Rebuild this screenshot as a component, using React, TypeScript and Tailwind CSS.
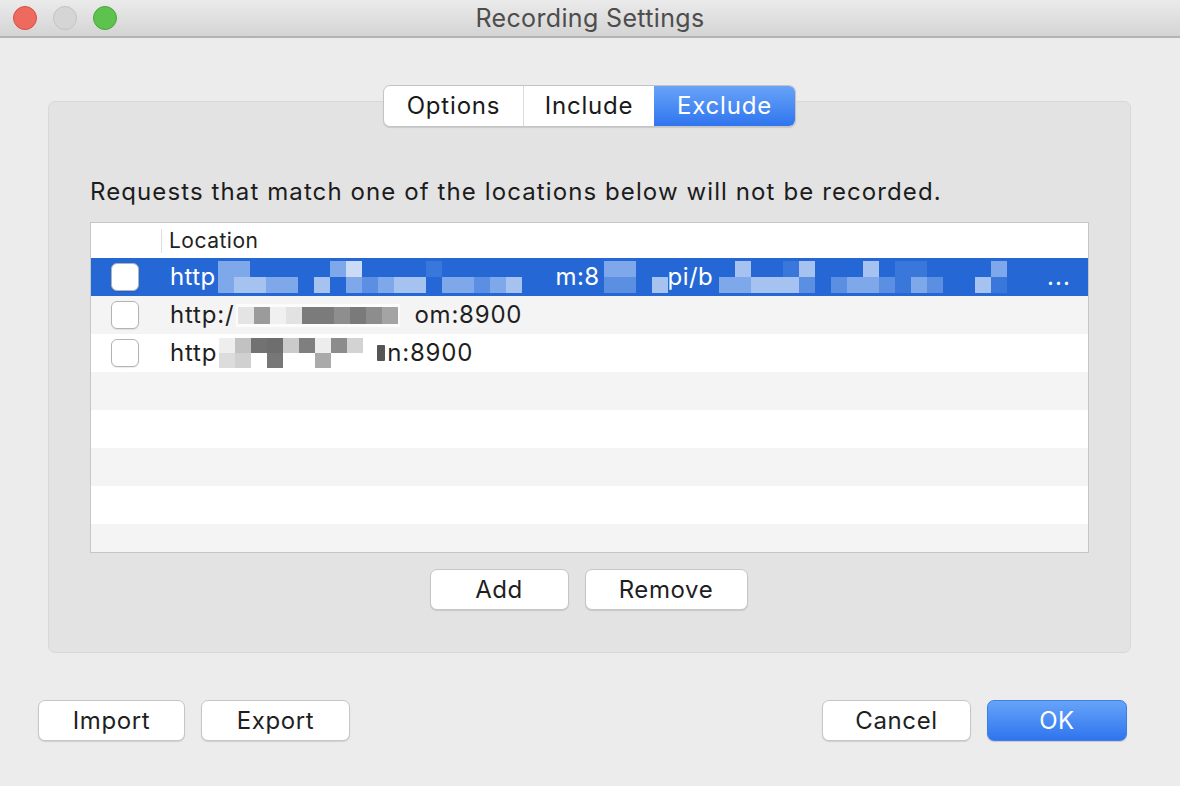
import React from "react";

const BLUE = [
  "bg-[#2568d5]",
  "bg-[#3a77db]",
  "bg-[#5a8fe2]",
  "bg-[#7ea8ea]",
  "bg-[#a6c2f1]",
  "bg-[#cbdaf6]",
];

function BlueMosaic({ top, bottom }: { top: string; bottom: string }) {
  return (
    <div className="flex flex-col shrink-0">
      {[top, bottom].map((row, ri) => (
        <div key={ri} className="flex">
          {row.split("").map((c, i) => (
            <div key={i} className={`w-[16px] h-[16px] ${BLUE[Number(c)]}`} />
          ))}
        </div>
      ))}
    </div>
  );
}

function GreyTiles({ tiles, h = "h-[17px]" }: { tiles: string[]; h?: string }) {
  return (
    <div className="flex">
      {tiles.map((t, i) => (
        <div key={i} className={`w-[16px] ${h} ${t}`} />
      ))}
    </div>
  );
}

function Checkbox() {
  return (
    <div className="w-[28px] h-[28px] rounded-[6px] bg-white border border-[#b3b3b3] shadow-[0_1px_1px_rgba(0,0,0,0.08)]" />
  );
}

function MacButton({ label, w, primary = false }: { label: string; w: string; primary?: boolean }) {
  return (
    <button
      className={
        primary
          ? `${w} h-[41px] rounded-[7px] text-white text-[24px] tracking-[0.6px] leading-none bg-gradient-to-b from-[#66a3f8] to-[#2f74ee] border border-[#3d7fe8] shadow-[0_1px_1px_rgba(0,0,0,0.15)]`
          : `${w} h-[41px] rounded-[7px] text-[#1f1f1f] text-[24px] tracking-[0.6px] leading-none bg-white border border-[#c6c6c6] shadow-[0_1px_1px_rgba(0,0,0,0.12)]`
      }
    >
      {label}
    </button>
  );
}

export default function App() {
  const rowBgs = [
    "bg-[#2568d5]",
    "bg-[#f4f4f4]",
    "bg-white",
    "bg-[#f4f4f4]",
    "bg-white",
    "bg-[#f4f4f4]",
    "bg-white",
    "bg-[#f4f4f4]",
  ];

  return (
    <div className="w-[1180px] h-[786px] bg-[#ececec] flex flex-col font-['Inter','Liberation_Sans',sans-serif] overflow-hidden">
      {/* Title bar */}
      <div className="h-[38px] shrink-0 grid grid-cols-[1fr_auto_1fr] items-center bg-gradient-to-b from-[#ebebeb] to-[#d4d4d4] border-b-[2px] border-[#b3b3b3]">
        <div className="flex items-center gap-[16px] pl-[13px]">
          <div className="w-[24px] h-[24px] rounded-full bg-[#ee6a5e] border border-[#d55045]" />
          <div className="w-[24px] h-[24px] rounded-full bg-[#d5d5d5] border border-[#c3c3c3]" />
          <div className="w-[24px] h-[24px] rounded-full bg-[#5ec24e] border border-[#48a63b]" />
        </div>
        <div className="text-[25px] text-[#4d4d4d] leading-none tracking-[0.35px]">Recording Settings</div>
        <div />
      </div>

      {/* Body */}
      <div className="flex flex-col pl-[48px] pr-[49px] pt-[47px]">
        {/* Segmented control */}
        <div className="relative z-10 mx-auto -mb-[26px] flex h-[42px] rounded-[7px] border border-[#c4c4c4] bg-white shadow-[0_1px_1px_rgba(0,0,0,0.12)] overflow-hidden text-[24px] tracking-[0.8px] leading-none">
          <div className="w-[140px] flex items-center justify-center text-[#1a1a1a] border-r border-[#dcdcdc]">Options</div>
          <div className="w-[130px] flex items-center justify-center text-[#1a1a1a]">Include</div>
          <div className="w-[141px] flex items-center justify-center text-white bg-gradient-to-b from-[#68a3f8] to-[#2f74ee]">Exclude</div>
        </div>

        {/* Group box */}
        <div className="h-[552px] rounded-[7px] bg-[#e3e3e3] border border-[#d8d8d8] pt-[76px] px-[41px] flex flex-col">
          <div className="text-[24px] tracking-[1.1px] leading-[28px] text-[#1c1c1c] whitespace-nowrap">
            Requests that match one of the locations below will not be recorded.
          </div>

          {/* Table */}
          <div className="mt-[16px] h-[331px] border border-[#c6c6c6] bg-white overflow-hidden flex flex-col">
            <div className="h-[35px] shrink-0 flex items-center bg-white">
              <div className="w-[71px] h-[24px] border-r border-[#dedede]" />
              <div className="pl-[7px] text-[21px] tracking-[0.5px] text-[#222222]">Location</div>
            </div>
            {rowBgs.map((bg, i) => (
              <div key={i} className={`h-[38px] shrink-0 flex items-center ${bg}`}>
                <div className="w-[79px] shrink-0 pl-[20px] flex items-center">
                  {i < 3 && <Checkbox />}
                </div>
                {i === 0 && (
                  <div className="flex items-center text-white text-[24px] tracking-[0.4px] leading-none whitespace-nowrap">
                    <span className="shrink-0 mr-[2px]">http</span>
                    <BlueMosaic top="330000035000010000000" bottom="344330403234403323400" />
                    <span className="shrink-0 ml-[2px] mr-[4px]">m:8</span>
                    <BlueMosaic top="3300" bottom="2204" />
                    <span className="shrink-0 mr-[6px]">pi/b</span>
                    <BlueMosaic top="04001400040110000300" bottom="33444202332132004100" />
                    <span className="shrink-0 ml-[8px] tracking-[1px]">...</span>
                  </div>
                )}
                {i === 1 && (
                  <div className="flex items-center text-[#1f1f1f] text-[24px] tracking-[0.8px] leading-none whitespace-nowrap">
                    <span className="shrink-0 mr-[2px]">http:/</span>
                    <div className="shrink-0 bg-white/70 px-[2px] py-[3px] mr-[14px]">
                      <GreyTiles
                        tiles={[
                          "bg-[#e4e4e4]",
                          "bg-[#9b9b9b]",
                          "bg-[#f0f0f0]",
                          "bg-[#e2e2e2]",
                          "bg-[#7b7b7b]",
                          "bg-[#7b7b7b]",
                          "bg-[#8e8e8e]",
                          "bg-[#7a7a7a]",
                          "bg-[#8d8d8d]",
                          "bg-[#a4a4a4]",
                        ]}
                      />
                    </div>
                    <span className="shrink-0">om:8900</span>
                  </div>
                )}
                {i === 2 && (
                  <div className="flex items-center text-[#1f1f1f] text-[24px] tracking-[0.8px] leading-none whitespace-nowrap">
                    <span className="shrink-0 mr-[2px]">http</span>
                    <div className="shrink-0 flex flex-col bg-white/70">
                      <GreyTiles
                        h="h-[15px]"
                        tiles={[
                          "bg-[#eeeeee]",
                          "bg-[#c2c2c2]",
                          "bg-[#727272]",
                          "bg-[#6e6e6e]",
                          "bg-[#cbcbcb]",
                          "bg-[#7f7f7f]",
                          "bg-[#ededed]",
                          "bg-[#8c8c8c]",
                          "bg-[#d3d3d3]",
                        ]}
                      />
                      <GreyTiles
                        h="h-[15px]"
                        tiles={[
                          "bg-[#dcdcdc]",
                          "bg-[#d0d0d0]",
                          "bg-white",
                          "bg-[#777777]",
                          "bg-white",
                          "bg-white",
                          "bg-[#aaaaaa]",
                          "bg-white",
                          "bg-white",
                        ]}
                      />
                    </div>
                    <div className="shrink-0 ml-[14px] mr-[2px] w-[8px] h-[16px] bg-[#555555] rounded-[1px]" />
                    <span className="shrink-0">n:8900</span>
                  </div>
                )}
              </div>
            ))}
          </div>

          {/* Add / Remove */}
          <div className="mt-[16px] flex justify-center gap-[16px] pr-[2px]">
            <MacButton label="Add" w="w-[139px]" />
            <MacButton label="Remove" w="w-[163px]" />
          </div>
        </div>
      </div>

      {/* Bottom buttons */}
      <div className="mt-[47px] pl-[38px] pr-[53px] flex items-center">
        <div className="flex gap-[16px]">
          <MacButton label="Import" w="w-[147px]" />
          <MacButton label="Export" w="w-[149px]" />
        </div>
        <div className="ml-auto flex gap-[16px]">
          <MacButton label="Cancel" w="w-[149px]" />
          <MacButton label="OK" w="w-[140px]" primary />
        </div>
      </div>
    </div>
  );
}
